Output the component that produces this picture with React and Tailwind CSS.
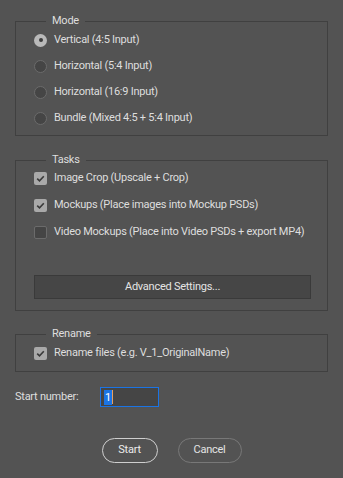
import { useState } from 'react';

const modes = [
  'Vertical (4:5 Input)',
  'Horizontal (5:4 Input)',
  'Horizontal (16:9 Input)',
  'Bundle (Mixed 4:5 + 5:4 Input)',
];

const tasks = [
  { label: 'Image Crop (Upscale + Crop)', on: true },
  { label: 'Mockups (Place images into Mockup PSDs)', on: true },
  { label: 'Video Mockups (Place into Video PSDs + export MP4)', on: false },
];

function Radio({ checked }) {
  return checked ? (
    <span className="w-[13px] h-[13px] rounded-full bg-[#b9b9b9] flex items-center justify-center shrink-0">
      <span className="w-[4px] h-[4px] rounded-full bg-[#3c3c3c]" />
    </span>
  ) : (
    <span className="w-[13px] h-[13px] rounded-full bg-[#454545] border border-[#6b6b6b] shrink-0" />
  );
}

function Check({ checked }) {
  return checked ? (
    <span className="w-[13px] h-[13px] rounded-[2px] bg-[#a9a9a9] flex items-center justify-center shrink-0">
      <svg width="9" height="9" viewBox="0 0 9 9">
        <path d="M1.2 4.6 L3.5 6.8 L7.8 2.2" fill="none" stroke="#3a3a3a" strokeWidth="1.6" />
      </svg>
    </span>
  ) : (
    <span className="w-[13px] h-[13px] rounded-[2px] bg-[#454545] border border-[#6b6b6b] shrink-0" />
  );
}

function Group({ title, children, className }) {
  return (
    <fieldset className={`w-full min-w-0 border border-[#404040] pl-[18px] pr-[16px] ${className}`}>
      <legend className="ml-[12px] px-[6px] leading-[16px] text-[#dedede]">{title}</legend>
      {children}
    </fieldset>
  );
}

export default function App() {
  const [mode, setMode] = useState(0);
  const [checks, setChecks] = useState(tasks.map(t => t.on));
  const [rename, setRename] = useState(true);

  return (
    <div
      className="w-[343px] h-[478px] bg-[#535353] text-[#dedede] text-[11px] tracking-[-0.25px] px-[15px] pt-[13px] whitespace-nowrap"
      style={{ fontFamily: 'Roboto, "Liberation Sans", sans-serif' }}
    >
      <Group title="Mode" className="pb-[4px]">
        <div className="-mt-[2px]">
          {modes.map((m, i) => (
            <div key={m} onClick={() => setMode(i)} className="h-[26px] flex items-center gap-[7px]">
              <Radio checked={mode === i} />
              <span>{m}</span>
            </div>
          ))}
        </div>
      </Group>

      <Group title="Tasks" className="mt-[16px] pb-[11px]">
        <div className="-mt-[3px]">
          {tasks.map((t, i) => (
            <div
              key={t.label}
              onClick={() => setChecks(c => c.map((v, j) => (j === i ? !v : v)))}
              className="h-[27px] flex items-center gap-[7px]"
            >
              <Check checked={checks[i]} />
              <span>{t.label}</span>
            </div>
          ))}
        </div>
        <button className="mt-[29px] w-[277px] h-[24px] bg-[#464646] border border-[#3a3a3a] text-[#e4e4e4] flex items-center justify-center">
          Advanced Settings...
        </button>
      </Group>

      <Group title="Rename" className="mt-[15px] pb-[5px]">
        <div onClick={() => setRename(r => !r)} className="-mt-[2px] h-[26px] flex items-center gap-[7px]">
          <Check checked={rename} />
          <span>Rename files (e.g. V_1_OriginalName)</span>
        </div>
      </Group>

      <div className="mt-[15px] flex items-center">
        <span className="w-[85px]">Start number:</span>
        <div className="w-[59px] h-[20px] border border-[#1b74e4] bg-[#454545] flex items-center px-[3px]">
          <span className="bg-[#1b74e4] text-white leading-[15px] px-[1px]">1</span>
          <span className="w-[1px] h-[14px] bg-[#e8a060]" />
        </div>
      </div>

      <div className="mt-[31px] flex justify-center gap-[20px]">
        <button className="w-[56px] h-[25px] rounded-full border border-[#cfcfcf] text-[#ececec]">Start</button>
        <button className="w-[64px] h-[25px] rounded-full border border-[#787878] text-[#e4e4e4]">Cancel</button>
      </div>
    </div>
  );
}
